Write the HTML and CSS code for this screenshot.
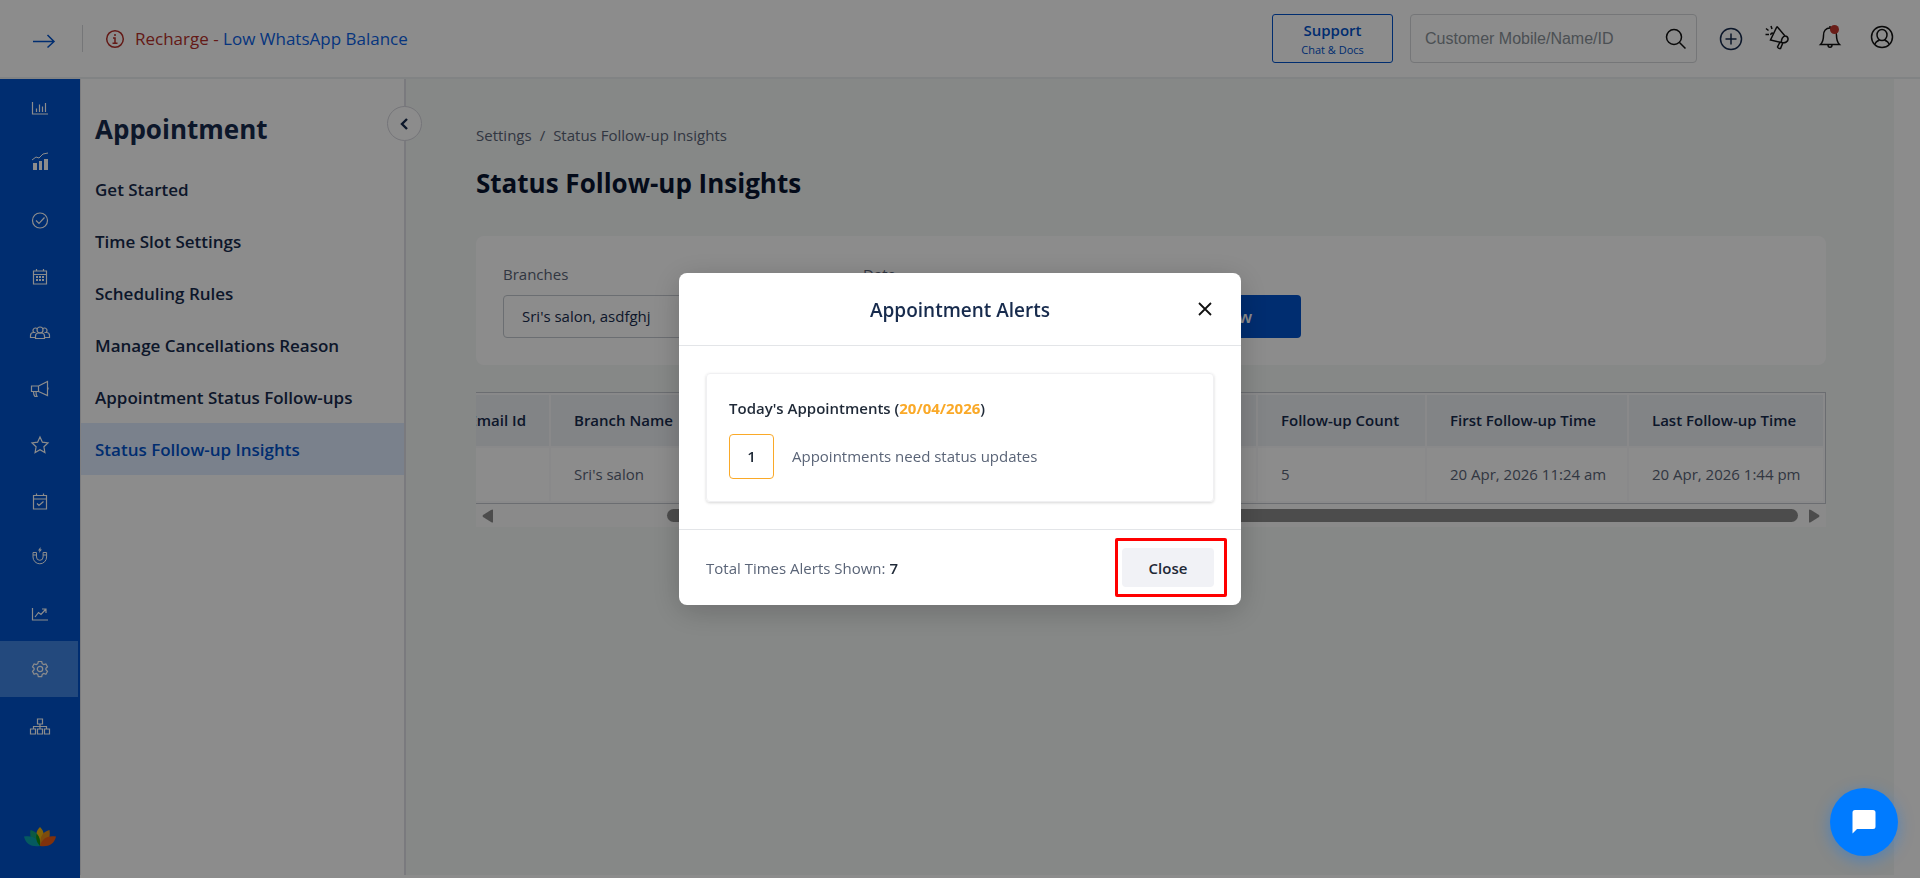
FILE: index.html
```html
<!DOCTYPE html>
<html lang="en">
<head>
<meta charset="UTF-8">
<meta name="viewport" content="width=device-width, initial-scale=1.0">
<title>Status Follow-up Insights</title>
<link rel="stylesheet" href="styles.css">
</head>
<body>
<header class="topbar">
    <button class="icon-btn menu-btn" aria-label="Expand menu">
        <svg width="24" height="16" viewBox="0 0 24 16"><path d="M1 8.500h21M15.500 2l6.500 6.500-6.500 6" /></svg>
    </button>
    <p class="notice">
        <svg width="20" height="20" viewBox="0 0 20 20"><circle cx="10" cy="10" r="8.300" /><path d="M10 5v2M8 9h2v5M7.500 14.300h5" /></svg>
        <span>Recharge - <a href="#">Low WhatsApp Balance</a></span>
    </p>
    <a class="support" href="#"><b>Support</b><span>Chat &amp; Docs</span></a>
    <form class="search">
        <input type="text" placeholder="Customer Mobile/Name/ID" aria-label="Customer Mobile/Name/ID">
        <button class="icon-btn" type="button" aria-label="Search">
            <svg width="22" height="22" viewBox="0 0 22 22"><circle cx="9" cy="9" r="7.500" /><path d="M14.500 14.500l6 6" /></svg>
        </button>
    </form>
    <button class="icon-btn add" aria-label="Add">
        <svg width="24" height="24" viewBox="0 0 24 24"><circle cx="12" cy="12" r="10.500" /><path d="M12 6.500v11M6.500 12h11" /></svg>
    </button>
    <div class="tools">
        <button class="icon-btn" aria-label="Announcements">
            <svg width="26" height="26" viewBox="0 0 26 26"><path d="M13 2.500L6.500 16l11 2.500M13 2.500l8 9.500M17.500 18.500c3.500 1 7-1 6.500-4-.3-1.500-1.500-2.500-3-2.500-2 0-4 3.500-3.500 6.500zM16 18l-2.500 5q1 2 3 1.500l2.500-6M8 5L7 2M4.500 6.500L2 4.500M5 10.500H1.500M9 9.500c-1-1-2.500 0-2 1.500" /></svg>
        </button>
        <button class="icon-btn bell" aria-label="Notifications">
            <svg width="24" height="26" viewBox="0 0 24 26"><path d="M12 4V2M2.500 20.500c2-2 3-4 3-9C5.500 7 8 4 12 4s6.500 3 6.500 7.500c0 5 1 7 3 9zM10 21c0 3 4 3 4 0" /></svg>
        </button>
        <button class="icon-btn" aria-label="Account">
            <svg width="24" height="24" viewBox="0 0 24 24"><circle cx="12" cy="12" r="10.500" /><ellipse cx="12" cy="10" rx="5" ry="5.500" /><path d="M5 19.500c.3-2.500 2.300-3.500 4.500-4.500M19 19.500c-.3-2.500-2.300-3.500-4.500-4.500" /></svg>
        </button>
    </div>
</header>

<div class="layout">
    <nav class="rail" aria-label="Modules">
        <ul>
            <li><a href="#" aria-label="Dashboard"><svg viewBox="0 0 20 20"><path d="M2.500 3v12h15.500M6.500 13V9.500M9.500 13V5.500M12.500 13V7.500M15.500 13V4" /></svg></a></li>
            <li><a href="#" aria-label="Sales"><svg viewBox="0 0 20 20"><path class="fill" d="M3 8h4v7H3zM9 6h3v9H9zM14 4h4v11h-4z" /><path class="thin" d="M2 5l4-3 3 1 4-4 5-1" /></svg></a></li>
            <li><a href="#" aria-label="Tasks"><svg viewBox="0 0 20 20"><circle cx="10" cy="9.500" r="7.500" /><path d="M6 9.500l3 3 5.500-6" /></svg></a></li>
            <li><a href="#" aria-label="Appointments"><svg viewBox="0 0 20 20"><path d="M3.500 4h13v13h-13zM3.500 7.500h13M6.500 2v2M13.500 2v2" /><path class="fill" d="M6 9h2v2H6zM9 9h2v2H9zM12 9h2v2h-2zM6 12h2v2H6zM9 12h2v2H9zM12 12h2v2h-2z" /></svg></a></li>
            <li><a href="#" aria-label="Customers"><svg viewBox="0 0 20 20"><circle cx="10" cy="7" r="3" /><path d="M5.500 15.500v-2.500c0-2 1.500-3 3-3h3c1.500 0 3 1 3 3v2.500zM7 5.500A2.500 2.500 0 1 0 4 9.500M5.500 14.500h-5v-2c0-2 1-3 3-3h2M13 5.500a2.500 2.500 0 1 1 3 4M14.500 14.500h5v-2c0-2-1-3-3-3h-2" /></svg></a></li>
            <li><a href="#" aria-label="Marketing"><svg viewBox="0 0 20 20"><path d="M1.500 7h7v5.500h-7zM8.500 7L17.500 2.500v14L8.500 12.500M18 8.500v2M3.500 12.500c0 2 .5 4 1.500 5h2c-1-1.500-1-3-1-5" /></svg></a></li>
            <li><a href="#" aria-label="Reviews"><svg viewBox="0 0 20 20"><path d="M10 2l2.400 5.200 5.600.7-4.100 3.900 1 5.700-4.900-2.800-4.900 2.800 1-5.700L2 7.900l5.600-.7z" /></svg></a></li>
            <li><a href="#" aria-label="Bookings"><svg viewBox="0 0 20 20"><path d="M3.500 4.500h13V18h-13zM3.500 8h13M6.500 2.500v2M13.500 2.500v2M7 12.500l2 2 4.500-4" /></svg></a></li>
            <li><a href="#" aria-label="Leads"><svg viewBox="0 0 20 20"><path class="thin" d="M3 5.500h3.500V10a3.300 3.300 0 0 0 6.600 0V5.500h3.500V10A6.700 6.700 0 0 1 3 10zM3 8h3.500M13 8h3.500" /><path class="fill" d="M10.500 0L8 3.500h1.500L9 6l3-3.500h-1.500z" /></svg></a></li>
            <li><a href="#" aria-label="Reports"><svg viewBox="0 0 20 20"><path d="M2.500 5v12h15.500M5 14l3.500-4.500 2.500 2 4.500-5M12 6h4v4" /></svg></a></li>
            <li class="active"><a href="#" aria-label="Settings"><svg viewBox="0 0 20 20"><circle cx="10" cy="10" r="2.700" /><path d="M8.300 2.500h3.400l.5 2.200 1.500.9 2.200-.7 1.600 2.900-1.600 1.500v1.500l1.600 1.500-1.600 2.900-2.200-.7-1.500.9-.5 2.200H8.300l-.5-2.200-1.500-.9-2.200.7-1.600-2.900 1.600-1.500V9.300L2.500 7.800l1.600-2.900 2.200.7 1.500-.9z" /></svg></a></li>
            <li><a href="#" aria-label="Branches"><svg viewBox="0 0 20 20"><path d="M7.500 4h5v5h-5zM.500 14h5v5h-5zM7.500 14h5v5h-5zM14.500 14h5v5h-5zM10 9v5M3.500 14v-2.500h13V14" /></svg></a></li>
        </ul>
        <svg class="logo" width="34" height="20" viewBox="0 0 34 20">
            <path fill="#f0b50f" d="M17 0c3 3 5 7 3 13l-3 6-3-6c-2-6 0-10 3-13z" />
            <path fill="#14a37c" d="M7.500 3c6 1.500 10 6 9.500 16-7-1-11-7-9.500-16z" />
            <path fill="#e38b18" d="M26.500 3c-6 1.500-10 6-9.500 16 7-1 11-7 9.500-16z" />
            <path fill="#0aa5ae" d="M1 9.500c9-1.500 14 2 16 9.500-8 1-14-1-16-9.500z" />
            <path fill="#ea5a14" d="M33 9.500c-9-1.500-14 2-16 9.500 8 1 14-1 16-9.500z" />
            <path fill="#12920f" d="M13.500 7c3 2.500 4 6 3.500 12-3-3-4.500-7-3.500-12z" />
        </svg>
    </nav>

    <aside class="panel">
        <h2>Appointment</h2>
        <button class="collapse" aria-label="Collapse panel">
            <svg width="12" height="16" viewBox="0 0 12 16"><path d="M8 3L3 8l5 5" /></svg>
        </button>
        <ul>
            <li><a href="#">Get Started</a></li>
            <li><a href="#">Time Slot Settings</a></li>
            <li><a href="#">Scheduling Rules</a></li>
            <li><a href="#">Manage Cancellations Reason</a></li>
            <li><a href="#">Appointment Status Follow-ups</a></li>
            <li class="active"><a href="#">Status Follow-up Insights</a></li>
        </ul>
    </aside>

    <main class="content">
        <nav class="crumbs" aria-label="Breadcrumb"><a href="#">Settings</a><span>/</span><a href="#">Status Follow-up Insights</a></nav>
        <h1>Status Follow-up Insights</h1>

        <form class="filters">
            <div class="field">
                <label for="branches">Branches</label>
                <input id="branches" type="text" value="Sri's salon, asdfghj">
            </div>
            <div class="field">
                <label for="date">Date</label>
                <input id="date" type="text">
            </div>
            <button class="show" type="button">Show</button>
        </form>

        <div class="table-wrap">
            <table>
                <colgroup><col class="c-email"><col class="c-branch"><col class="c-rest"><col class="c-count"><col class="c-first"><col class="c-last"></colgroup>
                <thead>
                    <tr><th class="right">Email Id</th><th>Branch Name</th><th></th><th>Follow-up Count</th><th>First Follow-up Time</th><th>Last Follow-up Time</th></tr>
                </thead>
                <tbody>
                    <tr><td></td><td>Sri's salon</td><td></td><td>5</td><td>20 Apr, 2026 11:24 am</td><td>20 Apr, 2026 1:44 pm</td></tr>
                </tbody>
            </table>
        </div>
        <div class="scrollbar">
            <svg width="12" height="14" viewBox="0 0 12 14"><path d="M11 1v12q0 1-2 0L1 8q-1-1 0-2l8-5q2-1 2 0z" /></svg>
            <div class="track"><div class="thumb"></div></div>
            <svg width="12" height="14" viewBox="0 0 12 14"><path d="M1 1v12q0 1 2 0l8-5q1-1 0-2L3 1Q1 0 1 1z" /></svg>
        </div>
    </main>
</div>

<div class="overlay">
    <section class="modal" role="dialog" aria-labelledby="modal-title">
        <header class="modal-head">
            <h3 id="modal-title">Appointment Alerts</h3>
            <button class="icon-btn modal-x" aria-label="Dismiss">
                <svg width="16" height="16" viewBox="0 0 16 16"><path d="M2 2l12 12M14 2L2 14" /></svg>
            </button>
        </header>
        <div class="modal-body">
            <div class="alert-card">
                <h4>Today's Appointments (<em>20/04/2026</em>)</h4>
                <div class="alert-row"><strong>1</strong><span>Appointments need status updates</span></div>
            </div>
        </div>
        <footer class="modal-foot">
            <p>Total Times Alerts Shown: <b>7</b></p>
            <div class="close-wrap">
                <button class="close">Close</button>
                <i class="highlight"></i>
            </div>
        </footer>
    </section>
</div>

<button class="chat" aria-label="Chat">
    <svg width="24" height="24" viewBox="0 0 24 24"><path d="M3 0h18q2.500 0 2.500 2.500v14Q23.500 19 21 19H5l-4.500 4.500v-21Q.500 0 3 0z" /></svg>
</button>
</body>
</html>
```
FILE: styles.css
```css
* {
    box-sizing: border-box;
}
body {
    display: flex;
    flex-direction: column;
    min-height: 100vh;
    margin: 0;
    font: 15px/24px "Segoe UI", "Open Sans", sans-serif;
    color: #172b4d;
    background: #fff;
}
h1, h2, h3, h4, p, ul {
    margin: 0;
    padding: 0;
}
ul {
    list-style: none;
}
a {
    color: inherit;
    text-decoration: none;
}
button, input {
    font: inherit;
    color: inherit;
}
svg {
    display: block;
    flex: none;
    fill: none;
    stroke: currentColor;
    stroke-width: 1.5;
}
.icon-btn {
    padding: 0;
    border: 0;
    background: none;
    color: #111;
}

/* top bar */
.topbar {
    display: flex;
    align-items: center;
    height: 79px;
    padding: 0 26px 0 32px;
    border-bottom: 2px solid #eceef0;
}
.menu-btn {
    padding-top: 4px;
    color: #0052cc;
}
.notice {
    display: flex;
    flex: 1;
    align-items: center;
    gap: 10px;
    height: 27px;
    margin-left: 26px;
    padding-left: 22px;
    border-left: 1px solid #d5d7da;
    font-size: 17px;
    color: #b5302a;
}
.notice a {
    color: #0b62e6;
}
.support {
    display: flex;
    flex-direction: column;
    justify-content: center;
    width: 121px;
    height: 49px;
    margin-right: 17px;
    border: 1px solid #0052cc;
    border-radius: 3px;
    text-align: center;
    color: #0052cc;
}
.support b {
    font-weight: 600;
    line-height: 22px;
}
.support span {
    font-size: 11px;
    line-height: 18px;
}
.search {
    display: flex;
    align-items: center;
    width: 287px;
    height: 49px;
    padding: 0 9px 0 14px;
    border: 1px solid #d5d7da;
    border-radius: 4px;
}
.search input {
    flex: 1;
    min-width: 0;
    padding: 0;
    border: 0;
    background: none;
    font: 16px "Liberation Sans", sans-serif;
}
.search input::placeholder {
    color: #8a9299;
}
.add {
    margin: 0 21px 0 22px;
    color: #172b4d;
}
.tools {
    display: flex;
    align-items: center;
    gap: 28px;
    padding-bottom: 4px;
}
.bell {
    position: relative;
}
.bell::after {
    content: "";
    position: absolute;
    top: 1px;
    right: 3px;
    width: 9px;
    height: 9px;
    border-radius: 50%;
    background: #c2352c;
}

/* left rail */
.layout {
    display: flex;
    flex: 1;
}
.rail {
    display: flex;
    flex-direction: column;
    justify-content: space-between;
    align-items: center;
    width: 80px;
    padding: 2px 0 31px;
    background: #0052cc;
    color: #fff;
}
.rail ul {
    width: 100%;
    padding-right: 2px;
}
.rail a {
    display: flex;
    align-items: center;
    justify-content: center;
    height: 56px;
    padding-left: 2px;
}
.rail li svg {
    width: 20px;
    height: 20px;
    stroke-width: 1.2;
    overflow: visible;
}
.rail .active {
    background: #4185e3;
}
.rail .fill {
    fill: currentColor;
    stroke: none;
}
.rail .thin {
    stroke-width: 1;
}
.logo {
    stroke: none;
}

/* section menu */
.panel {
    position: relative;
    width: 326px;
    margin-bottom: 3px;
    border-left: 1px solid #e4e4e8;
    border-right: 2px solid #dedee6;
}
.panel h2 {
    padding: 30px 14px 14px;
    font-size: 26px;
    line-height: 40px;
}
.panel li a {
    display: block;
    padding: 2px 14px 0;
    font-size: 17px;
    font-weight: 600;
    line-height: 50px;
}
.panel .active {
    background: #deebff;
    color: #0052cc;
}
.collapse {
    position: absolute;
    top: 27px;
    right: -18px;
    display: flex;
    align-items: center;
    justify-content: center;
    width: 35px;
    height: 35px;
    padding: 0;
    border: 1px solid #d5d5dd;
    border-radius: 50%;
    background: #fff;
}
.collapse svg {
    stroke-width: 2.4;
}

/* page */
.content {
    flex: 1;
    min-width: 0;
    margin: 0 26px 3px 0;
    padding: 44px 68px 0 70px;
    background: #f4f7f6;
}
.crumbs {
    display: flex;
    gap: 8px;
    color: #5a6477;
}
h1 {
    margin: 16px 0 33px;
    font-size: 26px;
    line-height: 40px;
    color: #091530;
}
.filters {
    display: flex;
    align-items: flex-end;
    gap: 60px;
    height: 129px;
    padding: 0 27px 27px;
    border-radius: 8px;
    background: #fff;
}
.field {
    display: flex;
    flex-direction: column;
    gap: 9px;
    width: 300px;
}
.field + .field {
    width: 236px;
}
.field label {
    color: #5a6477;
}
.field input {
    width: 100%;
    height: 43px;
    padding: 0 18px 2px;
    border: 1px solid #c4c8cf;
    border-radius: 4px;
    background: #fff;
}
.show {
    width: 142px;
    height: 43px;
    border: 0;
    border-radius: 4px;
    background: #0052cc;
    color: #fff;
    font-size: 17px;
    font-weight: 600;
}

/* the table is scrolled to its right end */
.table-wrap {
    display: flex;
    justify-content: flex-end;
    margin-top: 27px;
    overflow: hidden;
}
table {
    flex: none;
    width: 1460px;
    table-layout: fixed;
    border: 1px solid #c3c7ce;
    border-spacing: 2px;
    background: #f9fafb;
}
.c-email {
    width: 180px;
}
.c-branch {
    width: 180px;
}
.c-count {
    width: 167px;
}
.c-first {
    width: 200px;
}
.c-last {
    width: 194px;
}
th, td {
    padding: 0 23px 2px;
    text-align: left;
    white-space: nowrap;
}
th {
    height: 51px;
    background: #edf0f4;
    font-weight: 600;
}
td {
    height: 53px;
    background: #fff;
    color: #5a6477;
}
.right {
    text-align: right;
}
.scrollbar {
    display: flex;
    align-items: center;
    gap: 8px;
    height: 23px;
    padding: 0 6px;
    background: #fcfcfc;
    color: #8b8b8b;
}
.scrollbar path {
    fill: currentColor;
    stroke: none;
}
.track {
    flex: 1;
    padding: 0 2px 0 165px;
}
.thumb {
    height: 13px;
    border-radius: 7px;
    background: #8b8b8b;
}

/* modal */
.overlay {
    position: fixed;
    inset: 0;
    display: flex;
    align-items: center;
    justify-content: center;
    background: rgba(0, 0, 0, .45);
}
.modal {
    width: 562px;
    border-radius: 8px;
    background: #fff;
    box-shadow: 0 6px 30px rgba(0, 0, 0, .2);
}
.modal-head {
    position: relative;
    padding: 25px 27px 23px;
    border-bottom: 1px solid #e3e5e8;
    text-align: center;
}
.modal-head h3 {
    font-size: 19px;
    font-weight: 600;
    line-height: 24px;
}
.modal-x {
    position: absolute;
    top: 28px;
    right: 28px;
}
.modal-x svg {
    stroke-width: 1.8;
}
.modal-body {
    padding: 27px;
}
.alert-card {
    padding: 22px;
    border: 1px solid #f0f0f2;
    border-radius: 4px;
    box-shadow: 0 1px 3px rgba(0, 0, 0, .16);
}
.alert-card h4 {
    margin-bottom: 14px;
    font-weight: 600;
    color: #1f2937;
}
.alert-card em {
    font-style: normal;
    font-weight: 700;
    color: #faa928;
}
.alert-row {
    display: flex;
    align-items: center;
    gap: 18px;
    color: #5a6477;
}
.alert-row span {
    padding-bottom: 2px;
}
.alert-row strong {
    width: 45px;
    height: 45px;
    border: 1px solid #faa928;
    border-radius: 4px;
    font-weight: 600;
    line-height: 43px;
    text-align: center;
    color: #1f2937;
}
.modal-foot {
    display: flex;
    align-items: center;
    justify-content: space-between;
    padding: 18px 27px;
    border-top: 1px solid #e3e5e8;
    color: #5a6477;
}
.modal-foot b {
    font-weight: 600;
    color: #1f2937;
}
.close-wrap {
    position: relative;
}
.close {
    display: block;
    width: 92px;
    height: 39px;
    border: 0;
    border-radius: 4px;
    background: #f1f2f6;
    font-weight: 600;
    color: #1f2937;
}
.highlight {
    position: absolute;
    inset: -10px -13px -10px -7px;
    border: 3px solid #f00;
    border-radius: 2px;
}

.chat {
    position: fixed;
    right: 22px;
    bottom: 22px;
    display: flex;
    align-items: center;
    justify-content: center;
    width: 68px;
    height: 68px;
    padding: 0;
    border: 0;
    border-radius: 50%;
    background: #007bff;
    box-shadow: 0 4px 16px rgba(0, 123, 255, .4);
    color: #fff;
}
.chat svg {
    fill: currentColor;
    stroke: none;
}
```
